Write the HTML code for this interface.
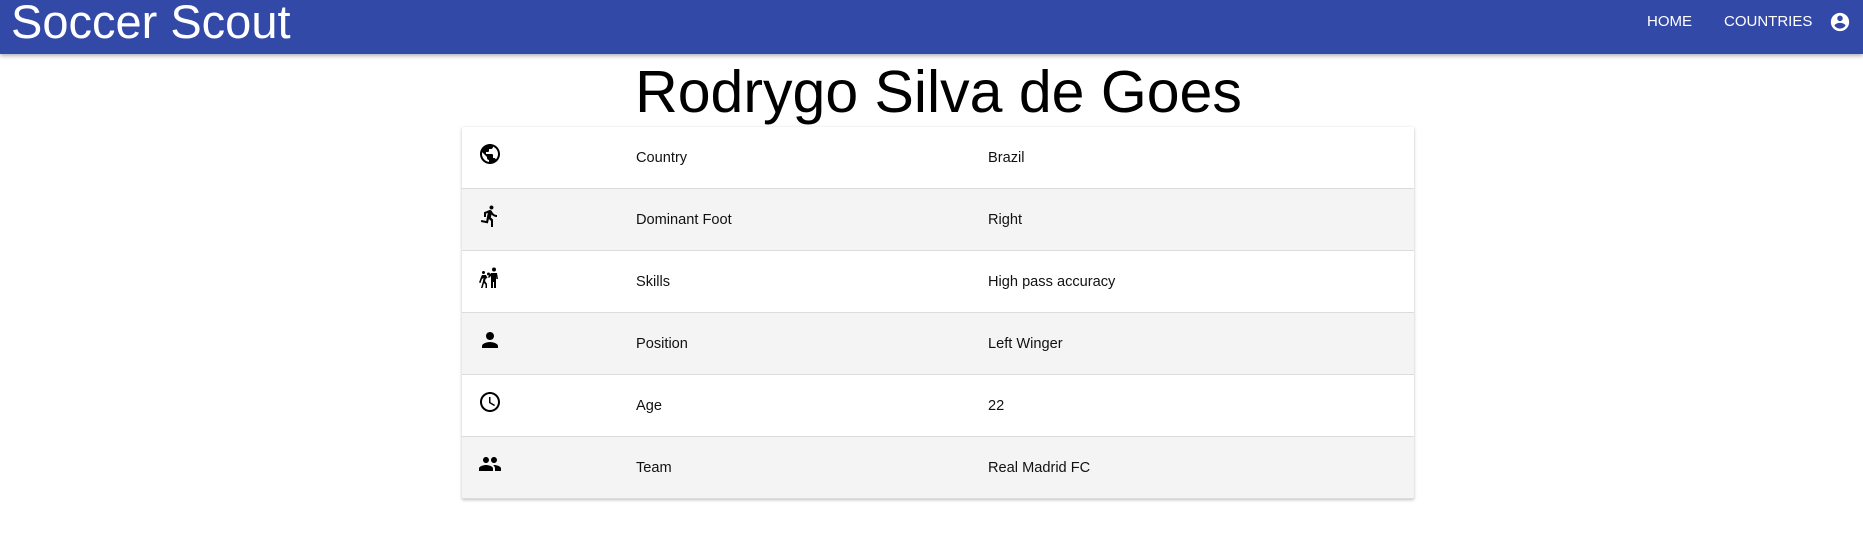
<!DOCTYPE html>
<html><head><meta charset="utf-8"><style>
*{margin:0;padding:0;box-sizing:border-box}
body{width:1863px;height:539px;background:#fff;font-family:"Liberation Sans",Arial,sans-serif;position:relative;overflow:hidden}
.bar{position:absolute;left:0;top:0;width:1863px;height:54px;background:#3349a8;box-shadow:0 2px 4px rgba(0,0,0,.3)}
.brand{position:absolute;left:11px;top:-5px;color:#fff;font-size:47px;line-height:54px}
.nav{position:absolute;top:0;color:#fff;font-size:15px;line-height:44px}
.acct{position:absolute;left:1829px;top:11px}
h1{position:absolute;left:0;width:1877px;text-align:center;top:58px;font-weight:400;font-size:59px;line-height:68px;color:#000}
.tbl{position:absolute;left:462px;top:127px;width:952px;box-shadow:0 1px 3px rgba(0,0,0,.25);background:#fff}
.row{height:62px;position:relative;border-bottom:1px solid #dcdcdc;font-size:14.6px;color:#111}
.row:nth-child(even){background:#f4f4f4}
.ic{position:absolute;left:16px;top:15px}
.l{position:absolute;left:174px;top:23px}
.v{position:absolute;left:526px;top:23px}
</style></head><body>
<div class="bar">
<div class="brand">Soccer Scout</div>
<div class="nav" style="left:1647px">HOME</div>
<div class="nav" style="left:1724px">COUNTRIES</div>
<svg class="acct" width="22" height="22" viewBox="0 0 24 24"><path fill="#fff" d="M12 2C6.48 2 2 6.48 2 12s4.48 10 10 10 10-4.48 10-10S17.52 2 12 2zm0 3c1.66 0 3 1.34 3 3s-1.34 3-3 3-3-1.34-3-3 1.34-3 3-3zm0 14.2c-2.5 0-4.71-1.28-6-3.22.03-1.99 4-3.08 6-3.08 1.99 0 5.97 1.09 6 3.08-1.29 1.94-3.5 3.22-6 3.22z"/></svg>
</div>
<h1>Rodrygo Silva de Goes</h1>
<div class="tbl">
<div class="row"><svg class="ic" width="24" height="24" viewBox="0 0 24 24"><path d="M12 2C6.48 2 2 6.48 2 12s4.48 10 10 10 10-4.48 10-10S17.52 2 12 2zm-1 17.93c-3.95-.49-7-3.85-7-7.93 0-.62.08-1.21.21-1.79L9 15v1c0 1.1.9 2 2 2v1.93zm6.9-2.54c-.26-.81-1-1.39-1.9-1.39h-1v-3c0-.55-.45-1-1-1H8v-2h2c.55 0 1-.45 1-1V7h2c1.1 0 2-.9 2-2v-.41c2.93 1.19 5 4.06 5 7.41 0 2.08-.8 3.97-2.1 5.39z"/></svg><span class="l">Country</span><span class="v">Brazil</span></div>
<div class="row"><svg class="ic" width="24" height="24" viewBox="0 0 24 24"><path d="M13.49 5.48c1.1 0 2-.9 2-2s-.9-2-2-2-2 .9-2 2 .9 2 2 2zm-3.6 13.9l1-4.4 2.1 2v6h2v-7.5l-2.1-2 .6-3c1.3 1.5 3.3 2.5 5.5 2.5v-2c-1.9 0-3.5-1-4.3-2.4l-1-1.6c-.4-.6-1-1-1.7-1-.3 0-.5.1-.8.1l-5.2 2.2v4.7h2v-3.4l1.8-.7-1.6 8.1-4.9-1-.4 2 7 1.4z"/></svg><span class="l">Dominant Foot</span><span class="v">Right</span></div>
<div class="row"><svg class="ic" width="24" height="24" viewBox="0 0 24 24"><path d="M4 6.5a1.5 1.5 0 1 0 3 0 1.5 1.5 0 1 0-3 0M14 3.5a2 2 0 1 0 4 0 2 2 0 1 0-4 0M9 8a1.5 1.5 0 1 0 3 0 1.5 1.5 0 1 0-3 0M13 7h6l1 6h-1.6l-.4-3v12h-2v-6h-1v6h-2V10l-2 2-1-1 3-4zM4 9h4l1.5 3-1 .5L8 12l-1 3 2 3v4H7.5v-3.5L6 17l-1.5 5H3l2-7 .5-3L4 13l-1.5 4L1 16.5 3 11z"/></svg><span class="l">Skills</span><span class="v">High pass accuracy</span></div>
<div class="row"><svg class="ic" width="24" height="24" viewBox="0 0 24 24"><path d="M12 12c2.21 0 4-1.79 4-4s-1.79-4-4-4-4 1.79-4 4 1.79 4 4 4zm0 2c-2.67 0-8 1.34-8 4v2h16v-2c0-2.66-5.33-4-8-4z"/></svg><span class="l">Position</span><span class="v">Left Winger</span></div>
<div class="row"><svg class="ic" width="24" height="24" viewBox="0 0 24 24"><path d="M11.99 2C6.47 2 2 6.48 2 12s4.47 10 9.99 10C17.52 22 22 17.52 22 12S17.52 2 11.99 2zM12 20c-4.42 0-8-3.58-8-8s3.58-8 8-8 8 3.58 8 8-3.58 8-8 8zm.5-13H11v6l5.25 3.15.75-1.23-4.5-2.67z"/></svg><span class="l">Age</span><span class="v">22</span></div>
<div class="row"><svg class="ic" width="24" height="24" viewBox="0 0 24 24"><path d="M16 11c1.66 0 2.99-1.34 2.99-3S17.66 5 16 5c-1.66 0-3 1.34-3 3s1.34 3 3 3zm-8 0c1.66 0 2.99-1.34 2.99-3S9.66 5 8 5C6.34 5 5 6.34 5 8s1.34 3 3 3zm0 2c-2.33 0-7 1.17-7 3.5V19h14v-2.5c0-2.33-4.67-3.5-7-3.5zm8 0c-.29 0-.62.02-.97.05 1.16.84 1.97 1.97 1.97 3.45V19h6v-2.5c0-2.33-4.67-3.5-7-3.5z"/></svg><span class="l">Team</span><span class="v">Real Madrid FC</span></div>
</div>
</body></html>
